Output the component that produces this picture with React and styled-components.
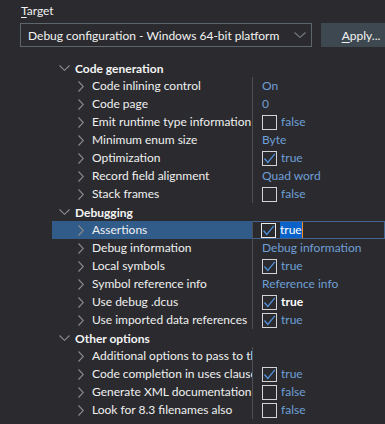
import React from "react";
import styled, { createGlobalStyle } from "styled-components";

const Global = createGlobalStyle`
  html, body { margin: 0; padding: 0; overflow: hidden; }
  body {
    background: #2b2b2f;
    color: #f0f0f0;
    font-family: Lato, "Noto Sans", sans-serif;
    font-size: 12px;
  }
`;

const Page = styled.div`
  width: 385px;
  height: 424px;
  overflow: hidden;
  background: #2b2b2f;
`;

const TargetArea = styled.div`
  padding: 2px 0 0 20px;
`;

const Label = styled.div`
  height: 21px;
  line-height: 18px;
  padding-left: 1px;
  color: #f0f0f0;
  & u { text-decoration-thickness: 1px; text-underline-offset: 2px; }
`;

const ComboRow = styled.div`
  display: flex;
  gap: 9px;
  height: 24px;
  width: 420px;
`;

const Combo = styled.div`
  box-sizing: border-box;
  flex: 0 0 292px;
  height: 24px;
  border: 1px solid #5d656d;
  display: flex;
  align-items: center;
  justify-content: space-between;
  padding: 0 5px 0 7px;
  color: #f2f2f2;
  white-space: nowrap;
  overflow: hidden;
`;

const ApplyButton = styled.div`
  box-sizing: border-box;
  flex: 0 0 80px;
  height: 24px;
  background: #3e4850;
  display: flex;
  align-items: center;
  justify-content: center;
  color: #f2f2f2;
  white-space: nowrap;
  & u { text-decoration-thickness: 1px; text-underline-offset: 2px; }
`;

const Tree = styled.div`
  margin: 12px 0 0 52px;
  width: 333px;
`;

const Row = styled.div`
  display: grid;
  grid-template-columns: 200px 1px 1fr;
  height: 18px;
  line-height: 18px;
`;

const HeaderRow = styled.div`
  display: flex;
  align-items: center;
  height: 18px;
  padding-left: 7px;
  gap: 5px;
  font-weight: bold;
  color: #f4f4f4;
`;

const NameCell = styled.div`
  display: flex;
  align-items: center;
  padding-left: 26px;
  gap: 8px;
  white-space: nowrap;
  overflow: hidden;
  background: ${(p) => (p.$selected ? "#315c8a" : "transparent")};
  color: #f0f0f0;
`;

const Divider = styled.div`
  background: #4d4f55;
`;

const ValueCell = styled.div`
  display: flex;
  align-items: center;
  gap: 4px;
  padding-left: 9px;
  white-space: nowrap;
  overflow: hidden;
  box-sizing: border-box;
  color: #6e9fd6;
  ${(p) =>
    p.$editing
      ? `border: 1px solid #41658c; border-left: none; padding-left: 8px;`
      : ""}
`;

const ValueText = styled.span`
  color: ${(p) => (p.$strong ? "#ffffff" : "#6e9fd6")};
  font-weight: ${(p) => (p.$strong ? "bold" : "normal")};
`;

const SelectedText = styled.span`
  background: #0a62c9;
  color: #ffffff;
  line-height: 16px;
  padding-right: 0;
  border-right: 1px solid #f08c2a;
`;

const Box = styled.span`
  box-sizing: border-box;
  width: 15px;
  height: 15px;
  border: 1px solid ${(p) => (p.$bright ? "#eaeaea" : "#d4d4d4")};
  display: inline-flex;
  align-items: center;
  justify-content: center;
  flex: 0 0 auto;
`;

const ChevronRight = () => (
  <svg width="6" height="11" viewBox="0 0 6 11" style={{ flex: "0 0 auto" }}>
    <path d="M0.5 0.5 L5.3 5.5 L0.5 10.5" fill="none" stroke="#8c8c8c" strokeWidth="1.1" />
  </svg>
);

const ChevronDown = ({ color = "#8c8c8c", w = 11, h = 6 }) => (
  <svg width={w} height={h} viewBox={`0 0 ${w} ${h}`} style={{ flex: "0 0 auto" }}>
    <path d={`M0.5 0.5 L${w / 2} ${h - 0.7} L${w - 0.5} 0.5`} fill="none" stroke={color} strokeWidth="1.1" />
  </svg>
);

const Check = ({ checked, bright }) => (
  <Box $bright={bright}>
    {checked && (
      <svg width="13" height="13" viewBox="0 0 13 13">
        <path d="M1.5 6.5 L4.8 10.5 L11.8 1.8" fill="none" stroke="#4f90d8" strokeWidth="1.3" />
      </svg>
    )}
  </Box>
);

const data = [
  {
    title: "Code generation",
    items: [
      { name: "Code inlining control", value: "On" },
      { name: "Code page", value: "0" },
      { name: "Emit runtime type information", check: false },
      { name: "Minimum enum size", value: "Byte" },
      { name: "Optimization", check: true },
      { name: "Record field alignment", value: "Quad word" },
      { name: "Stack frames", check: false },
    ],
  },
  {
    title: "Debugging",
    items: [
      { name: "Assertions", check: true, selected: true },
      { name: "Debug information", value: "Debug information" },
      { name: "Local symbols", check: true },
      { name: "Symbol reference info", value: "Reference info" },
      { name: "Use debug .dcus", check: true, strong: true },
      { name: "Use imported data references", check: true },
    ],
  },
  {
    title: "Other options",
    items: [
      { name: "Additional options to pass to the compiler", value: "" },
      { name: "Code completion in uses clause", check: true },
      { name: "Generate XML documentation", check: false },
      { name: "Look for 8.3 filenames also", check: false },
    ],
  },
];

function Value({ item }) {
  if (item.check !== undefined) {
    const text = item.check ? "true" : "false";
    return (
      <>
        <Check checked={item.check} bright={item.selected} />
        {item.selected ? (
          <SelectedText>{text}</SelectedText>
        ) : (
          <ValueText $strong={item.strong}>{text}</ValueText>
        )}
      </>
    );
  }
  return <ValueText>{item.value}</ValueText>;
}

export default function App() {
  return (
    <Page>
      <Global />
      <TargetArea>
        <Label>
          <u>T</u>arget
        </Label>
        <ComboRow>
          <Combo>
            <span>Debug configuration - Windows 64-bit platform</span>
            <ChevronDown color="#7a7f85" w={12} h={6} />
          </Combo>
          <ApplyButton>
            <span>
              <u>A</u>pply...
            </span>
          </ApplyButton>
        </ComboRow>
      </TargetArea>
      <Tree>
        {data.map((group) => (
          <React.Fragment key={group.title}>
            <HeaderRow>
              <ChevronDown />
              <span>{group.title}</span>
            </HeaderRow>
            {group.items.map((item) => (
              <Row key={item.name}>
                <NameCell $selected={item.selected}>
                  <ChevronRight />
                  <span>{item.name}</span>
                </NameCell>
                <Divider />
                <ValueCell $editing={item.selected}>
                  <Value item={item} />
                </ValueCell>
              </Row>
            ))}
          </React.Fragment>
        ))}
      </Tree>
    </Page>
  );
}
